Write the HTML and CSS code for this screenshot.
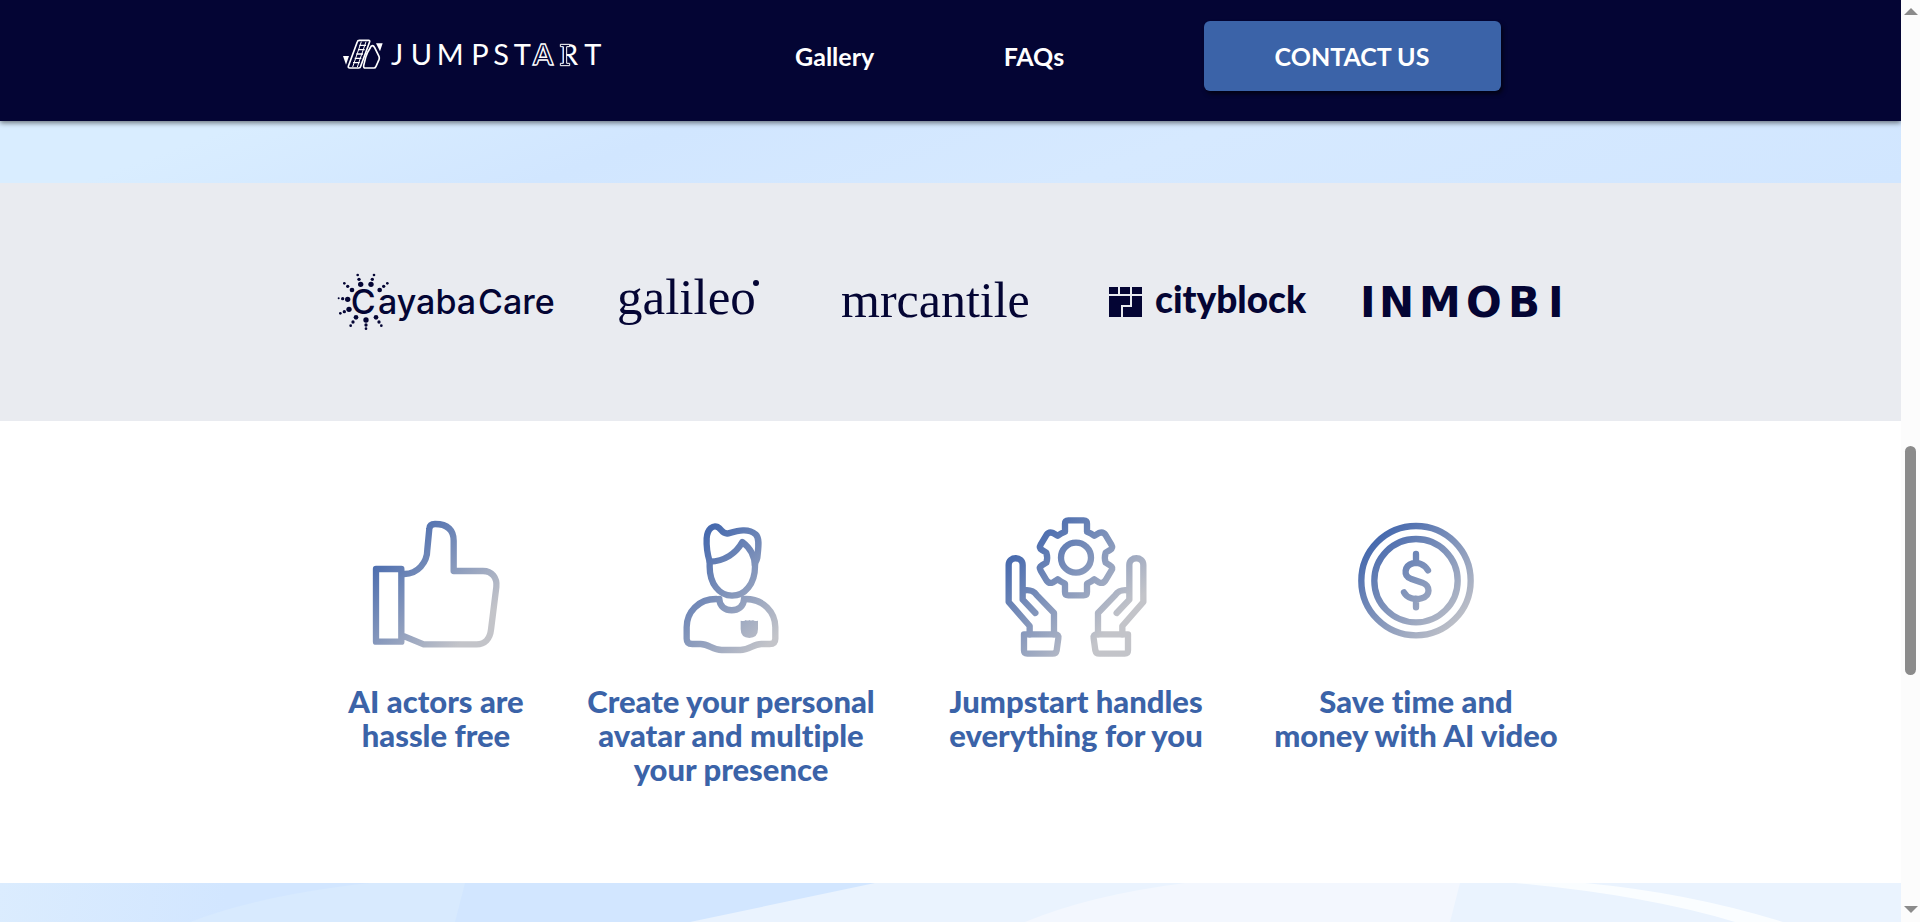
FILE: index.html
```html
<!DOCTYPE html>
<html lang="en">
<head>
    <meta charset="UTF-8">
    <meta name="viewport" content="width=device-width, initial-scale=1.0">
    <title>Jumpstart</title>
    <link rel="stylesheet" href="styles.css">
</head>
<body>
    <div class="page">
        <header class="header">
            <div class="header-inner">
                <a class="logo" href="#" aria-label="Jumpstart">
                    <svg width="275" height="65" viewBox="21 9 825 195">
                        <g fill="none" stroke="#fff" stroke-width="5" stroke-linejoin="round">
                            <path d="M88 58h28q4 0 3 4L92 136q-1 5-6 5H59q-5 0-4-5L82 62q1-4 6-4z"/>
                            <path d="M94 62L68 138M108 62L82 138" stroke-width="3"/>
                            <path d="M88 73h20M84 86h20M79 99h20M74 112h20M69 125h20" stroke-width="4"/>
                            <path d="M127 74q-4 0-7 8-10 15-13 27l-6 25q-1 7 5 7h26q4 0 6-5l9-20q2-5 0-10l-13-26q-3-6-7-6z"/>
                        </g>
                        <path d="M39 105h18l-9 26zM138 67h20l-8 24z" fill="#fff"/>
                        <text class="logo-text" y="133" x="183 242 320 424 490 551">JUMPST</text>
                        <text class="logo-text logo-outline" y="133" x="609">A</text>
                        <text class="logo-text" y="133" x="690 763">RT</text>
                        <path d="M691 70h28v7h-9v50h9v7h-28v-7h9V77h-9z" fill="#040534" stroke="#fff" stroke-width="3"/>
                    </svg>
                </a>
                <a class="nav-link" href="#gallery">Gallery</a>
                <a class="nav-link" href="#faqs">FAQs</a>
                <button class="contact-btn" type="button">CONTACT US</button>
            </div>
        </header>

        <div class="sky sky-top"></div>

        <section class="clients">
            <svg width="223" height="80" viewBox="51 0 669 240" fill="#040534">
                <g>
                    <circle cx="113" cy="45" r="4"/><circle cx="117" cy="58" r="5"/><circle cx="122" cy="73" r="8"/>
                    <circle cx="162" cy="45" r="4"/><circle cx="157" cy="58" r="5"/><circle cx="153" cy="73" r="8"/>
                    <circle cx="73" cy="70" r="4"/><circle cx="83" cy="79" r="5"/><circle cx="96" cy="90" r="7"/>
                    <circle cx="202" cy="70" r="4"/><circle cx="191" cy="79" r="5"/><circle cx="179" cy="90" r="7"/>
                    <circle cx="56" cy="115" r="3"/><circle cx="68" cy="116" r="5"/><circle cx="83" cy="118" r="8"/>
                    <circle cx="61" cy="160" r="4"/><circle cx="73" cy="155" r="5"/><circle cx="87" cy="148" r="8"/>
                    <circle cx="92" cy="197" r="4"/><circle cx="99" cy="186" r="5"/><circle cx="108" cy="172" r="7"/>
                    <circle cx="138" cy="206" r="4"/><circle cx="138" cy="195" r="5"/><circle cx="138" cy="180" r="8"/>
                    <circle cx="184" cy="197" r="4"/><circle cx="177" cy="186" r="5"/><circle cx="168" cy="172" r="7"/>
                </g>
                <text class="brand-cayaba" y="163"><tspan x="92">C</tspan><tspan x="174">ayaba</tspan> <tspan x="474">Care</tspan></text>
            </svg>
            <svg width="165" height="80" viewBox="0 0 165 80" fill="#040534">
                <text class="brand-galileo" x="7" y="54">galileo</text>
                <circle cx="146" cy="23" r="3"/>
            </svg>
            <svg width="220" height="80" viewBox="0 0 220 80" fill="#040534">
                <text class="brand-mrcantile" x="16" y="57">mrcantile</text>
            </svg>
            <svg width="215" height="80" viewBox="0 0 215 80" fill="#040534">
                <path d="M14 27h9v7h-9zM25 27h10v7h-10zM37 27h10v7h-10z"/>
                <path d="M14 36h21v9h-9v12h-12zM37 36h10v21h-19v-10h9z"/>
                <text class="brand-cityblock" x="60" y="53">cityblock</text>
            </svg>
            <svg width="205" height="80" viewBox="0 0 205 80" fill="#040534">
                <text class="brand-inmobi" x="0 19 59 106 148 188" y="57">INMOBI</text>
            </svg>
        </section>

        <section class="features">
            <svg class="defs" width="0" height="0" aria-hidden="true">
                <defs>
                    <linearGradient id="fade" gradientUnits="userSpaceOnUse" x1="90" y1="90" x2="350" y2="350">
                        <stop offset="0" stop-color="#4669ae"/>
                        <stop offset="1" stop-color="#c3c4c9"/>
                    </linearGradient>
                </defs>
            </svg>
            <div class="feature">
                <svg class="icon" width="150" height="150" viewBox="3 0 450 450">
                    <path d="M48 177h76v218H48zM133 192c40 0 69-34 69-74l6-62q1-14 17-14c40 0 56 20 56 50v91h88c27 0 43 20 40 48l-16 128c-3 28-19 44-43 44H191l-58-24"/>
                </svg>
                <h3>AI actors are<br>hassle free</h3>
            </div>
            <div class="feature">
                <svg class="icon" width="120" height="150" viewBox="5 0 360 450">
                    <path d="M121 155c-9-30-10-50-9-70 2-30 20-40 33-34 13 7 14 23 32 19 30-8 60-16 82 3 13 12 8 40 5 70-3 15-6 8-7 22"/>
                    <path d="M121 155c45-1 80-26 98-59 20 15 38 38 38 74 0 50-30 87-69 87s-67-37-67-87z"/>
                    <path d="M141 267c-54 0-89 39-89 85v34q0 16 17 16h25c25 0 35 18 63 18h56c28 0 38-18 63-18h25q17 0 17-16v-34c0-46-36-85-89-85"/>
                    <path d="M150 267c0 45 74 45 74 0"/>
                    <path class="solid" d="M214 332q12 3 15-2 6 3 11 0 6 3 11 0 4 5 15 2v25q0 26-26 27-26-1-26-27z"/>
                </svg>
                <h3>Create your personal<br>avatar and multiple<br>your presence</h3>
            </div>
            <div class="feature">
                <svg class="icon" width="160" height="150" viewBox="3 0 480 450">
                    <circle cx="243" cy="143" r="45"/>
                    <path d="M220 31h46q10 0 10 10v24q12 4 22 12l14-8q12-5 19 5l18 30q6 10-4 16l-13 8q-5 16 0 30l13 8q10 6 4 16l-18 30q-7 10-19 5l-14-9q-10 8-22 13v25q0 10-10 10h-46q-10 0-10-10v-25q-12-5-22-13l-14 9q-12 5-19-5l-18-30q-6-10 4-16l13-8q5-15 0-30l-13-8q-10-6-4-16l18-30q7-10 19-5l14 8q10-8 22-12V41q0-10 10-10z"/>
                    <path d="M87 373h93q12 0 10 12l-5 36q-2 10-12 10H97q-10 0-10-10z"/>
                    <path d="M104 373v-25l-63-72V165c0-27 42-27 42 0v104l38 40M83 242c24-5 34 2 43 14l51 53v64"/>
                    <path d="M399 373h-93q-12 0-10 12l5 36q2 10 12 10h76q10 0 10-10z"/>
                    <path d="M382 373v-25l63-72V165c0-27-42-27-42 0v104l-38 40M403 242c-24-5-34 2-43 14l-51 53v64"/>
                </svg>
                <h3>Jumpstart handles<br>everything for you</h3>
            </div>
            <div class="feature">
                <svg class="icon" width="140" height="150" viewBox="2 0 420 450">
                    <circle cx="212" cy="212" r="164"/>
                    <circle cx="212" cy="212" r="125"/>
                    <path d="M212 132v27M212 266v26M248 181c-12-20-32-25-46-21-25 7-29 37-6 46l35 12c25 10 25 39-2 47-20 6-44 0-53-18"/>
                </svg>
                <h3>Save time and<br>money with AI video</h3>
            </div>
        </section>

        <div class="sky sky-bottom">
            <svg viewBox="0 0 1901 39" preserveAspectRatio="none" aria-hidden="true">
                <path d="M190 39Q260 12 370 0h95l-10 39z" fill="#d8eafe"/>
                <path d="M690 39L875 0h1026v39z" fill="#eaf3fe"/>
                <path d="M1025 39Q1090 12 1185 0h275l-10 39z" fill="#f3f7fe"/>
                <path d="M1515 0q130 12 220 39h48Q1690 10 1585 0z" fill="#fafdff"/>
            </svg>
        </div>
    </div>

    <div class="scrollbar" aria-hidden="true">
        <svg width="14" height="8" viewBox="0 0 14 8"><path d="M7 0l7 7H0z"/></svg>
        <div class="thumb"></div>
        <svg width="14" height="8" viewBox="0 0 14 8"><path d="M0 0h14L7 7z"/></svg>
    </div>
</body>
</html>
```
FILE: styles.css
```css
body {
    margin: 0;
    display: flex;
    height: 100vh;
    overflow: hidden;
    background-color: #fff;
    font-family: Lato, "Open Sans", sans-serif;
    font-variant-ligatures: none;
}

.page {
    flex: 1;
    min-width: 0;
    display: flex;
    flex-direction: column;
}

/* Header */
.header {
    position: relative;
    background-color: #040534;
    padding: 21px 0 30px;
    box-shadow: 0 2px 5px rgba(0, 0, 0, 0.5);
}

.header-inner {
    display: grid;
    grid-template-columns: 2fr 1fr 1fr 367px;
    align-items: center;
    max-width: 1164px;
    margin: 0 auto;
    padding-right: 64px;
}

.logo,
.logo svg {
    display: block;
}

.logo-text {
    font-family: Lato, sans-serif;
    font-weight: 400;
    font-size: 87px;
    fill: #fff;
}

.logo-outline {
    font-weight: 700;
    fill: #040534;
    stroke: #fff;
    stroke-width: 4px;
}

.nav-link {
    color: #fff;
    font-size: 25px;
    font-weight: 700;
    line-height: 28px;
    text-align: center;
    text-decoration: none;
}

.contact-btn {
    height: 70px;
    margin-left: 70px;
    border: none;
    border-radius: 6px;
    background-color: #3b63a8;
    box-shadow: 2px 3px 4px rgba(0, 0, 0, 0.6);
    color: #fff;
    font-family: inherit;
    font-size: 25px;
    font-weight: 700;
    cursor: pointer;
}

/* Sky strips between sections */
.sky {
    background: linear-gradient(100deg, #dbecfe 0%, #d2e6ff 12%, #d2e6ff 100%);
}

.sky-top {
    height: 62px;
    background: linear-gradient(160deg, #d9edff 0%, #d9edff 12%, #d1e6ff 34%, #d6e9ff 60%, #d1e6ff 100%);
}

.sky-bottom {
    flex: 1;
    min-height: 0;
}

.sky-bottom svg {
    display: block;
    width: 100%;
    height: 100%;
}

/* Client logos */
.clients {
    display: flex;
    justify-content: center;
    gap: 50px;
    padding: 77px 0 81px;
    background-color: #e9ebf0;
}

.brand-cayaba {
    font-family: Inter, sans-serif;
    font-weight: 500;
    font-size: 102px;
}

.brand-galileo {
    font-family: "Liberation Serif", serif;
    font-size: 51px;
}

.brand-mrcantile {
    font-family: "Liberation Serif", serif;
    font-size: 50px;
}

.brand-cityblock {
    font-family: Lato, sans-serif;
    font-weight: 900;
    font-size: 37px;
}

.brand-inmobi {
    font-family: "DejaVu Sans", sans-serif;
    font-weight: 700;
    font-size: 42px;
}

/* Features */
.features {
    display: grid;
    grid-template-columns: 176fr 294fr 276fr 284fr;
    column-gap: 60px;
    width: 100%;
    max-width: 1210px;
    margin: 0 auto;
    padding: 89px 0 97px 5px;
}

.defs {
    position: absolute;
}

.feature {
    display: flex;
    flex-direction: column;
    align-items: center;
    gap: 24px;
}

.icon {
    fill: none;
    stroke: url(#fade);
    stroke-width: 19px;
    stroke-linecap: round;
    stroke-linejoin: round;
}

.icon .solid {
    fill: url(#fade);
    stroke: none;
}

.feature h3 {
    margin: 0;
    color: #3b63a8;
    font-size: 31px;
    font-weight: 900;
    line-height: 34px;
    text-align: center;
    white-space: nowrap;
}

/* Scrollbar */
.scrollbar {
    position: relative;
    width: 19px;
    box-sizing: border-box;
    padding: 8px 0;
    display: flex;
    flex-direction: column;
    align-items: center;
    justify-content: space-between;
    background-color: #fcfcfc;
    fill: #8b8b8b;
}

.thumb {
    width: 11px;
    height: 229px;
    margin-top: 198px;
    border-radius: 6px;
    background-color: #8b8b8b;
}
```
